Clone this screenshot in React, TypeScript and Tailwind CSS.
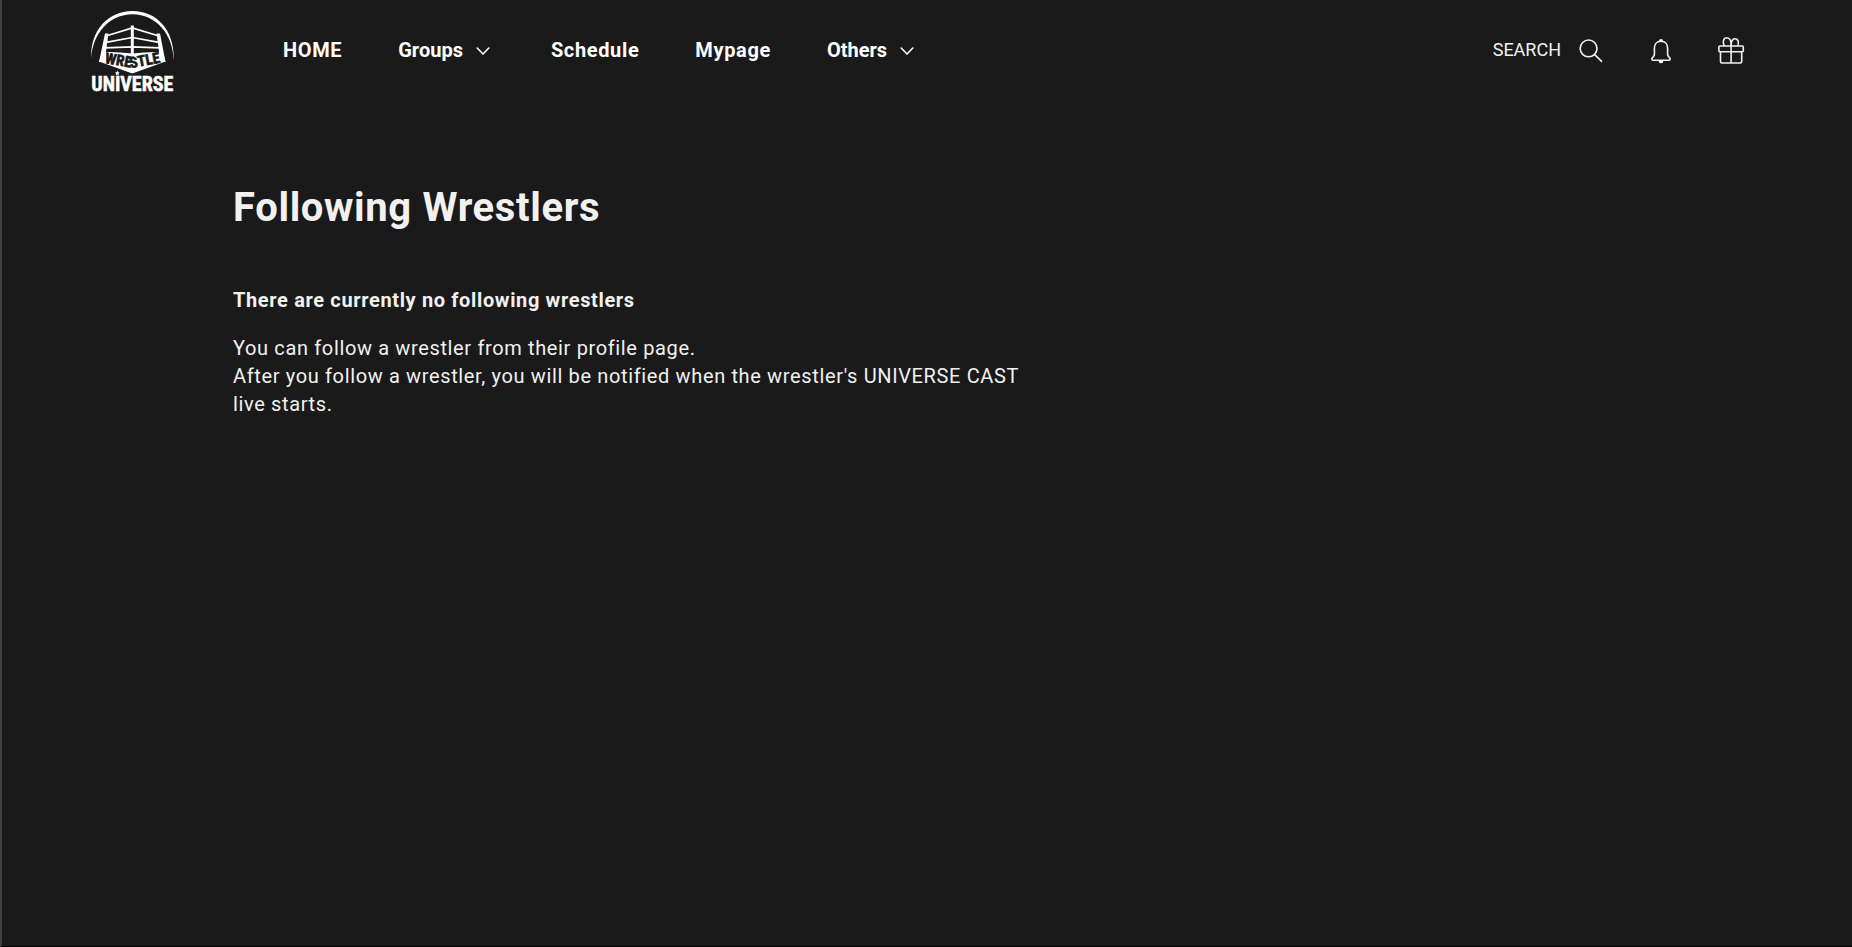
import React from 'react';

const navItems = [
  { label: 'HOME', hasMenu: false },
  { label: 'Groups', hasMenu: true },
  { label: 'Schedule', hasMenu: false },
  { label: 'Mypage', hasMenu: false },
  { label: 'Others', hasMenu: true },
];

const Logo: React.FC = () => (
  <svg width="84" height="92" viewBox="10 4 84 92" role="img" aria-label="Wrestle Universe" className="tracking-normal">
    {/* dome */}
    <path d="M11.3 58 C10 32 27 11 52.5 11 C78 11 95 32 93.7 60 C93 34 76 14.2 52.5 14.2 C29 14.2 12.5 34 11.3 58 Z" fill="#fff" />
    {/* ropes */}
    <g fill="none" stroke="#fff" strokeWidth="1.7">
      <path d="M26 36 L52.3 28 L79 36" />
      <path d="M26 42.3 L52.3 37.5 L79 42.3" />
      <path d="M25 47.8 L52.3 46.8 L80 47.8" />
    </g>
    {/* posts */}
    <path d="M25 33.5 H28.5 L25.5 55 L23.5 62 H19 Z" fill="#fff" />
    <path d="M80 33.5 H76.5 L79.5 55 L81.5 62 H85.5 Z" fill="#fff" />
    <path d="M50.8 25.5 H53.8 V58 H50.8 Z" fill="#fff" />
    {/* apron */}
    <path d="M23.5 52 Q38 51.5 52.3 53.5 Q67 51.5 81.5 52 L85.5 61.5 L52.3 73.5 L19 61.5 Z" fill="#fff" />
    <path id="apron-line" d="M22 62.5 Q39 65.5 52.3 68 Q66 65.5 83 62" fill="none" />
    <text fontSize="15" fontWeight="700" fill="#1a1a1a" stroke="#1a1a1a" strokeWidth="0.6" className="font-['Roboto_Condensed',Roboto,sans-serif]">
      <textPath href="#apron-line" startOffset="50%" textAnchor="middle">WRESTLE</textPath>
    </text>
    <path d="M37.3 70.6 l.8 1.6 1.7 .2 -1.3 1.2 .4 1.8 -1.6 -.9 -1.6 .9 .4 -1.8 -1.3 -1.2 1.7 -.2z" fill="#fff" />
    <text x="52.3" y="91" textAnchor="middle" fontSize="20" fontWeight="700" fill="#fff" stroke="#fff" strokeWidth="0.5" className="font-['Roboto_Condensed',Roboto,sans-serif]">
      UNIVERSE
    </text>
  </svg>
);

const ChevronIcon: React.FC = () => (
  <svg width="24" height="24" viewBox="0 0 24 24" fill="none" stroke="#fff" strokeWidth="1.6" strokeLinecap="round" strokeLinejoin="round">
    <path d="M6.2 10 L12 16 L17.8 10" />
  </svg>
);

const SearchIcon: React.FC = () => (
  <svg width="28" height="28" viewBox="0 -1 28 28" fill="none" stroke="#f1f1f1" strokeWidth="1.6" strokeLinecap="round">
    <circle cx="11.6" cy="11.4" r="8.4" />
    <path d="M17.7 17.6 L24.6 24.4" />
  </svg>
);

const BellIcon: React.FC = () => (
  <svg width="28" height="28" viewBox="0 -1 28 28" fill="none" stroke="#f1f1f1" strokeWidth="1.6" strokeLinejoin="round">
    <path d="M14 4.3 C9.8 4.3 7.4 7.4 7.4 11.3 V17.6 C7.4 19.8 4.8 20.2 4.8 22 Q4.8 23.3 6.2 23.3 H21.8 Q23.2 23.3 23.2 22 C23.2 20.2 20.6 19.8 20.6 17.6 V11.3 C20.6 7.4 18.2 4.3 14 4.3 Z" />
    <path d="M11.7 4.4 Q12 2 14 2 Q16 2 16.3 4.4 Z" fill="#f1f1f1" stroke="none" />
    <path d="M11.4 23.6 H16.6 Q16.2 26.3 14 26.3 Q11.8 26.3 11.4 23.6 Z" fill="#f1f1f1" stroke="none" />
  </svg>
);

const GiftIcon: React.FC = () => (
  <svg width="28" height="28" viewBox="0 -1 28 28" fill="none" stroke="#f1f1f1" strokeWidth="1.6" strokeLinejoin="round">
    <rect x="1.9" y="9" width="24.4" height="5.7" rx="1" />
    <path d="M3.5 14.7 V24.6 Q3.5 26 4.9 26 H23.3 Q24.7 26 24.7 24.6 V14.7" />
    <path d="M14.1 9 V26" />
    <path d="M14.1 9 C14.6 3.8 12.8 .8 9.8 .8 C6.4 .8 5.2 5.2 7.3 9" />
    <path d="M14.1 9 C13.8 4.8 15.3 1.8 18 1.8 C21.2 1.8 22.3 5.6 20.6 9" />
  </svg>
);

const Header: React.FC = () => (
  <header className="flex h-[100px] items-center pl-[88px] pr-[107px] text-white">
    <a href="#" className="mr-[109px]">
      <Logo />
    </a>
    <nav className="flex flex-1 items-center gap-14 text-xl font-bold">
      {navItems.map((item) =>
        item.hasMenu ? (
          <button key={item.label} type="button" className="flex items-center gap-2 tracking-normal">
            {item.label}
            <ChevronIcon />
          </button>
        ) : (
          <a key={item.label} href="#">
            {item.label}
          </a>
        )
      )}
    </nav>
    <div className="flex items-center gap-[42px]">
      <button type="button" className="flex items-center gap-4 text-lg tracking-normal text-[#f1f1f1]">
        SEARCH
        <SearchIcon />
      </button>
      <button type="button" aria-label="Notifications">
        <BellIcon />
      </button>
      <button type="button" aria-label="Gifts">
        <GiftIcon />
      </button>
    </div>
  </header>
);

const App: React.FC = () => {
  return (
    <div className="min-h-screen border-b border-l-2 border-b-black border-l-[#414144] bg-[#1a1a1a] font-[Roboto,sans-serif] tracking-[0.04em]">
      <Header />
      <main className="mx-auto max-w-[1388px] pt-20 text-[#f1f1f1]">
        <h1 className="text-[40px] leading-14 font-bold">Following Wrestlers</h1>
        <section className="mt-[50px] max-w-[800px] text-xl leading-7">
          <h2 className="font-bold">There are currently no following wrestlers</h2>
          <p className="mt-5">
            You can follow a wrestler from their profile page.
            <br />
            After you follow a wrestler, you will be notified when the wrestler's UNIVERSE CAST live starts.
          </p>
        </section>
      </main>
    </div>
  );
};

export default App;
